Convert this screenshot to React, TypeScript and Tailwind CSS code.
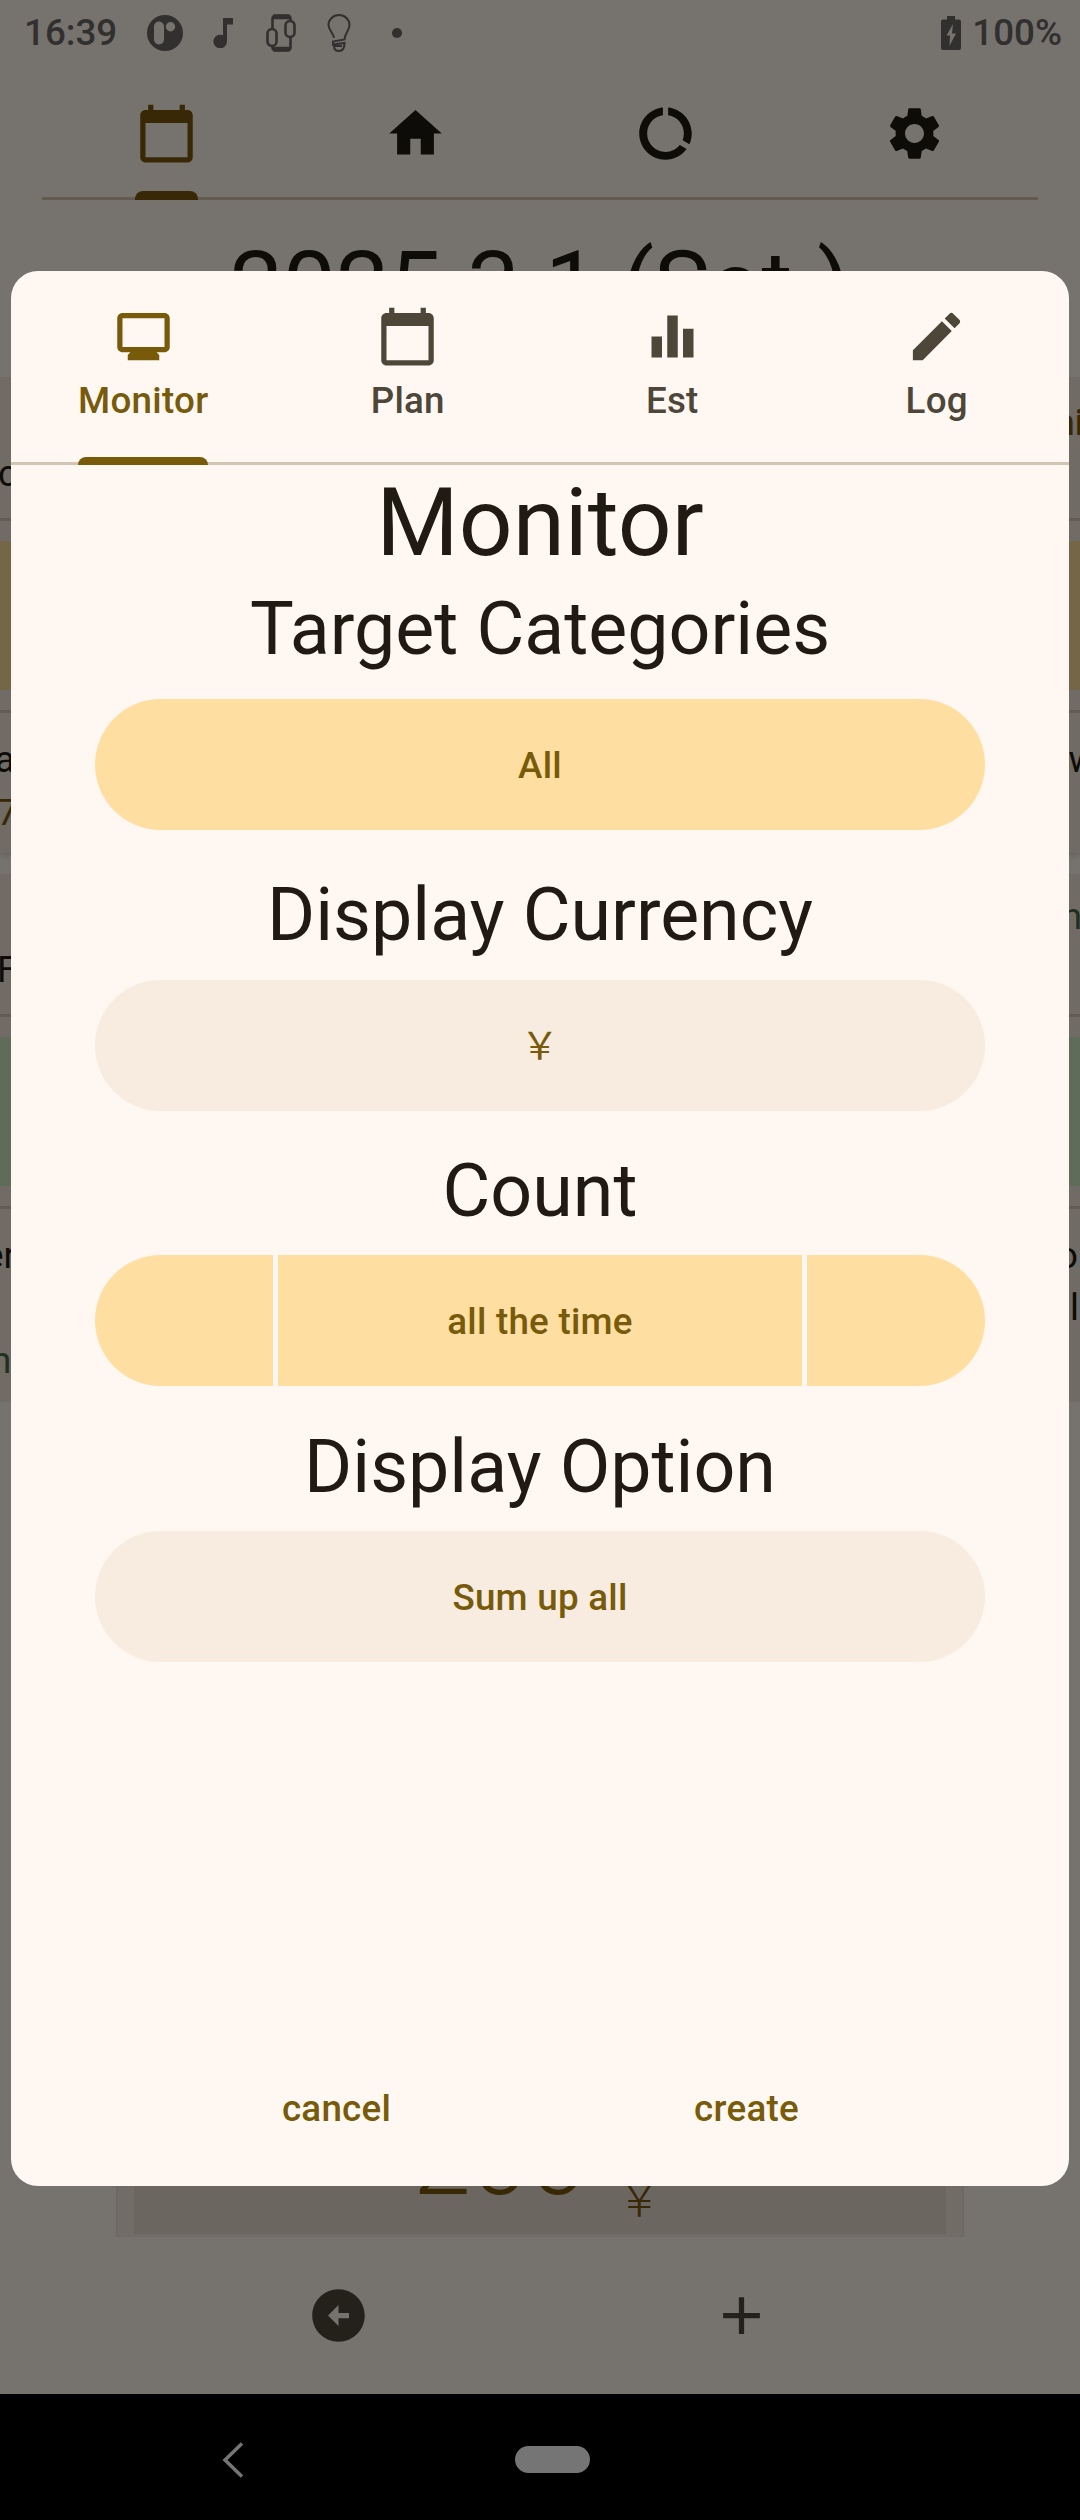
import type { ReactNode } from "react";

const paths = {
  calendar:
    "M20 3h-1V1h-2v2H7V1H5v2H4c-1.1 0-2 .9-2 2v16c0 1.1.9 2 2 2h16c1.1 0 2-.9 2-2V5c0-1.1-.9-2-2-2zm0 18H4V8h16v13z",
  home: "M10 20v-6h4v6h5v-8h3L12 3 2 12h3v8z",
  usage:
    "M13 2.05v3.03c3.39.49 6 3.39 6 6.92 0 .9-.18 1.75-.48 2.54l2.6 1.53c.56-1.24.88-2.62.88-4.07 0-5.18-3.95-9.45-9-9.95zM12 19c-3.87 0-7-3.13-7-7 0-3.53 2.61-6.43 6-6.92V2.05c-5.06.5-9 4.76-9 9.95 0 5.52 4.47 10 9.99 10 3.31 0 6.24-1.61 8.06-4.09l-2.6-1.53C16.17 17.98 14.21 19 12 19z",
  settings:
    "M19.14 12.94c.04-.3.06-.61.06-.94 0-.32-.02-.64-.07-.94l2.03-1.58c.18-.14.23-.41.12-.61l-1.92-3.32c-.12-.22-.37-.29-.59-.22l-2.39.96c-.5-.38-1.03-.7-1.62-.94l-.36-2.54c-.04-.24-.24-.41-.48-.41h-3.84c-.24 0-.43.17-.47.41l-.36 2.54c-.59.24-1.13.57-1.62.94l-2.39-.96c-.22-.08-.47 0-.59.22L2.74 8.87c-.12.21-.08.47.12.61l2.03 1.58c-.05.3-.09.63-.09.94s.02.64.07.94l-2.03 1.58c-.18.14-.23.41-.12.61l1.92 3.32c.12.22.37.29.59.22l2.39-.96c.5.38 1.03.7 1.62.94l.36 2.54c.05.24.24.41.48.41h3.84c.24 0 .44-.17.47-.41l.36-2.54c.59-.24 1.13-.56 1.62-.94l2.39.96c.22.08.47 0 .59-.22l1.92-3.32c.12-.22.07-.47-.12-.61l-2.01-1.58zM12 15.6c-1.98 0-3.6-1.62-3.6-3.6s1.62-3.6 3.6-3.6 3.6 1.62 3.6 3.6-1.62 3.6-3.6 3.6z",
  monitor:
    "M20 3H4c-1.1 0-2 .9-2 2v11c0 1.1.9 2 2 2h3l-1 1v2h12v-2l-1-1h3c1.1 0 2-.9 2-2V5c0-1.1-.9-2-2-2zm0 13H4V5h16v11z",
  bars: "M10 20h4V4h-4v16zm-6 0h4v-8H4v8zM16 9v11h4V9h-4z",
  edit: "M3 17.25V21h3.75L17.81 9.94l-3.75-3.75L3 17.25zM20.71 7.04c.39-.39.39-1.02 0-1.41l-2.34-2.34c-.39-.39-1.02-.39-1.41 0l-1.83 1.83 3.75 3.75 1.83-1.83z",
  back: "M22 12c0-5.52-4.48-10-10-10S2 6.48 2 12s4.48 10 10 10 10-4.48 10-10zm-10-1h4v2h-4v3l-4-4 4-4v3z",
  add: "M19 13h-6v6h-2v-6H5v-2h6V5h2v6h6v2z",
};

function Icon({ d }: { d: string }) {
  return (
    <svg viewBox="0 0 24 24" className="size-[63px] shrink-0" fill="currentColor">
      <path d={d} />
    </svg>
  );
}

function StatusBar() {
  return (
    <div className="flex h-[66px] items-center pl-[24px] pr-[18px] text-[36.75px] text-[#31302f]">
      <span className="w-[121px] font-medium leading-[66px]">16:39</span>
      <svg viewBox="0 0 36 36" className="ml-[2px] size-9" fill="currentColor">
        <path
          fillRule="evenodd"
          d="M18 0a18 18 0 1 0 0 36a18 18 0 1 0 0-36zM12 6.500a5 5 0 0 1 5 5v13a5 5 0 0 1-10 0v-13a5 5 0 0 1 5-5zM23.500 7a4.700 4.700 0 1 0 0 9.400a4.700 4.700 0 1 0 0-9.400z"
        />
      </svg>
      <svg viewBox="0 0 20 30" className="ml-[30px] h-[30px] w-5" fill="currentColor">
        <path d="M10 0h10v6.500h-6v17a6.800 6.800 0 1 1-4-6.200z" />
      </svg>
      <svg viewBox="0 0 30 38" className="ml-[33px] h-[38px] w-[30px]" fill="none" stroke="currentColor" strokeWidth="2.600">
        <path d="M6.500 14V4.500a3 3 0 0 1 3-3h12a3 3 0 0 1 3 3V6M6.500 31v2.500a3 3 0 0 0 3 3h12a3 3 0 0 0 3-3V24" />
        <path d="M7 3h17M7 35h17" strokeWidth="4.500" />
        <rect x="1.500" y="15" width="9" height="17" rx="4.500" />
        <rect x="19.500" y="7" width="9" height="16" rx="4.500" />
      </svg>
      <svg viewBox="0 0 24 38" className="ml-[31px] h-[38px] w-6" fill="none" stroke="currentColor" strokeWidth="2">
        <path d="M7 24C6.500 19 1.500 16 1.500 11a10.500 10 0 0 1 21 0c0 5-4.500 8-5 14.500l-11.500 2v3l11.500-1.500c0 5-2 8-5.500 8s-5-2.500-5-5h8" />
      </svg>
      <span className="ml-[41px] size-[10px] rounded-full bg-[#31302f]" />
      <svg viewBox="0 0 20 34" className="ml-auto h-[34px] w-5" fill="currentColor">
        <path
          fillRule="evenodd"
          d="M6 0h8v3.500h4a2 2 0 0 1 2 2V32a2 2 0 0 1-2 2H2a2 2 0 0 1-2-2V5.500a2 2 0 0 1 2-2h4zM12 8L5.500 19.500h3.500L8.500 30L15 17.500h-4z"
        />
      </svg>
      <span className="ml-[11px] font-medium leading-[66px]">100%</span>
    </div>
  );
}

function MainTabs() {
  return (
    <nav className="mx-[42px] flex h-[134px] border-b-[3px] border-[#635b50] text-[#0d0c08]">
      {[paths.calendar, paths.home, paths.usage, paths.settings].map((d, i) => (
        <div
          key={i}
          className={
            i === 0
              ? "flex flex-1 flex-col items-center justify-between pl-px pt-9 text-[#382806]"
              : "flex flex-1 flex-col items-center pl-0.5 pt-9"
          }
        >
          <Icon d={d} />
          {i === 0 && <span className="-mb-[3px] h-[9px] w-[63px] rounded-t-lg bg-[#382806]" />}
        </div>
      ))}
    </nav>
  );
}

function Edge({ left, right, className }: { left?: ReactNode; right?: ReactNode; className: string }) {
  return (
    <div className={`flex justify-between whitespace-nowrap text-[36.75px] leading-[44px] ${className}`}>
      <span>{left}</span>
      <span>{right}</span>
    </div>
  );
}

function MonitorCards() {
  return (
    <div className="w-full overflow-hidden text-[#0d0c08]">
      <section className="h-[476px] bg-[#706b64] shadow-md">
        <Edge
          className="h-[144px] border-b-[3px] border-[#625c54] pt-[24px]"
          left={<span className="-ml-[2px] block pt-[51px]">c</span>}
          right={<span className="-mr-[4px] block font-medium text-[#382806]">ni</span>}
        />
        <div className="mt-5 h-[149px] bg-[#756648]" />
        <Edge
          className="mt-5 h-[143px] border-t-[3px] border-[#625c54] pt-[25px]"
          left={
            <span className="block">
              <span className="-ml-[5px] block">a</span>
              <span className="-ml-[3px] mt-[9px] block text-[#382806]">7</span>
            </span>
          }
          right={<span className="-mr-4 block">w</span>}
        />
      </section>
      <section className="mt-[21px] h-[528px] bg-[#706b64] shadow-md">
        <Edge
          className="h-[143px] border-b-[3px] border-[#625c54] pt-[21px]"
          left={<span className="-ml-[3px] block pt-[53px]">F</span>}
          right={<span className="-mr-0.5 block text-[#1f2f20]">n</span>}
        />
        <div className="mt-5 h-[149px] bg-[#5f6c59]" />
        <Edge
          className="mt-5 h-[190px] border-t-[3px] border-[#625c54] pt-[25px]"
          left={
            <span className="block">
              <span className="-ml-4 block">er</span>
              <span className="-ml-[9px] mt-[61px] block text-[#1f2f20]">n</span>
            </span>
          }
          right={
            <span className="block text-right">
              <span className="mr-[2px] block">o</span>
              <span className="mt-[8px] block pr-px">l</span>
            </span>
          }
        />
      </section>
    </div>
  );
}

function Heading({ children, className }: { children: ReactNode; className: string }) {
  return <h2 className={`shrink-0 text-center text-[73.5px] leading-[94px] ${className}`}>{children}</h2>;
}

function Pill({ children, className }: { children: ReactNode; className: string }) {
  return (
    <button
      className={`mx-[84px] flex h-[131px] shrink-0 items-center justify-center rounded-[66px] pt-[3px] text-[36.75px] font-medium tracking-[0.26px] text-[#785a0b] ${className}`}
    >
      {children}
    </button>
  );
}

function Dialog() {
  const tabs = [
    { label: "Monitor", d: paths.monitor },
    { label: "Plan", d: paths.calendar },
    { label: "Est", d: paths.bars },
    { label: "Log", d: paths.edit },
  ];
  return (
    <div className="absolute left-[11px] top-[271px] flex h-[1915px] w-[1058px] flex-col overflow-hidden rounded-[27px] bg-[#fff8f2] text-[#1f1b13]">
      <nav className="flex h-[194px] shrink-0 border-b-[3px] border-[#d1c5b4] text-[#4e4639]">
        {tabs.map((t, i) => (
          <div
            key={t.label}
            className={
              i === 0
                ? "flex flex-1 flex-col items-center pt-[34px] text-[#785a0b]"
                : "flex flex-1 flex-col items-center pt-[34px]"
            }
          >
            <Icon d={t.d} />
            <span className="mt-[7px] text-[36.75px] font-medium leading-[52px] tracking-[0.26px]">{t.label}</span>
            {i === 0 && <span className="-mb-[3px] mt-auto h-2 w-[130px] shrink-0 rounded-t-lg bg-[#785a0b]" />}
          </div>
        ))}
      </nav>
      <h1 className="h-[114px] pt-px text-center text-[94.5px] leading-[114px]">Monitor</h1>
      <Heading className="h-[120px] pt-[3px]">Target Categories</Heading>
      <Pill className="bg-[#ffdea1]">All</Pill>
      <Heading className="pt-[38px] pb-[18px]">Display Currency</Heading>
      <Pill className="bg-[#f7ecdf]">
        <span className="mb-[10px] font-['Noto_Sans_CJK_JP',sans-serif] text-[38px] font-normal">￥</span>
      </Pill>
      <Heading className="pt-[33px] pb-[17px]">Count</Heading>
      <div className="mx-[84px] flex h-[131px] shrink-0 gap-[5px] overflow-hidden rounded-[66px] text-[36.75px] font-medium tracking-[0.26px] text-[#785a0b]">
        <button className="w-[178px] bg-[#ffdea1]" />
        <button className="flex-1 bg-[#ffdea1] pt-[3px]">all the time</button>
        <button className="w-[178px] bg-[#ffdea1]" />
      </div>
      <Heading className="pt-[34px] pb-[17px]">Display Option</Heading>
      <Pill className="bg-[#f7ecdf]">Sum up all</Pill>
      <div className="mt-auto mb-[50px] flex justify-center pl-[3px] text-[36.75px] font-medium leading-[54px] tracking-[0.26px] text-[#785a0b]">
        <button className="w-[410px]">cancel</button>
        <button className="w-[410px]">create</button>
      </div>
    </div>
  );
}

export default function App() {
  return (
    <div className="relative flex h-[2520px] w-[1080px] flex-col overflow-hidden bg-[#76726e] font-[Roboto,sans-serif]">
      <StatusBar />
      <MainTabs />
      <h1 className="h-[177px] pt-[29px] text-center text-[94.5px] leading-[114px] text-[#0d0c08]">2025.3.1 (Sat.)</h1>
      <MonitorCards />
      <div className="mx-auto mt-auto flex h-[180px] w-[848px] justify-center border-x-2 border-[#6d6962] bg-[#716d66] px-4 pb-[3px]">
        <div className="flex flex-1 items-end justify-center bg-[#6b665f] pr-1 text-[#382806]">
          <span className="mb-[22px] text-[105px] font-light leading-[106px]">200</span>
          <span className="mb-[9px] ml-[28px] font-['Noto_Sans_CJK_JP',sans-serif] text-[48px] font-light leading-[60px]">￥</span>
        </div>
      </div>
      <div className="flex h-[157px] justify-center gap-[340px] pt-[47px] text-[#24201a]">
        <Icon d={paths.back} />
        <Icon d={paths.add} />
      </div>
      <footer className="flex h-[126px] items-center bg-black pt-[5px]">
        <svg viewBox="0 0 22 36" className="ml-[222px] h-9 w-[22px]" fill="none" stroke="#757575" strokeWidth="3.500">
          <path d="M20 1.500L3 18L20 34.500" />
        </svg>
        <span className="ml-[271px] h-[27px] w-[75px] rounded-[14px] bg-[#757575]" />
      </footer>
      <Dialog />
    </div>
  );
}
